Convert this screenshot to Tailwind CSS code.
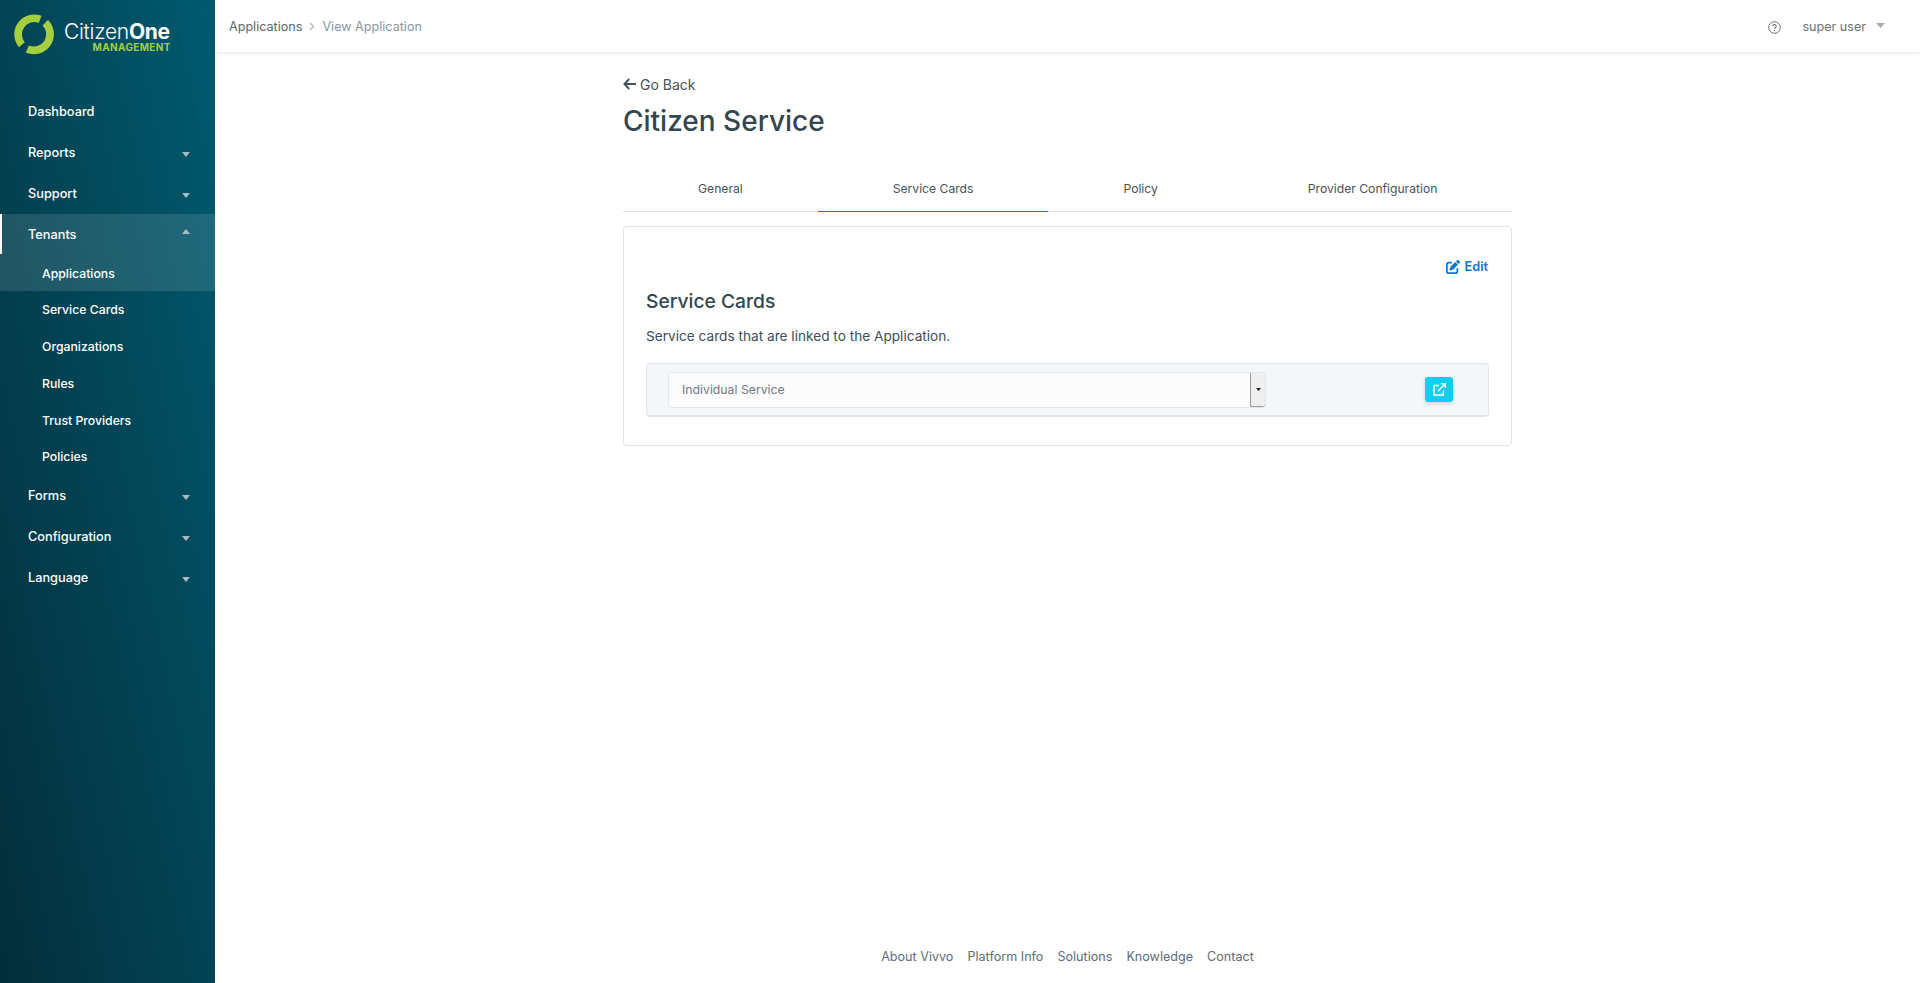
<!DOCTYPE html>
<html lang="en">
<head>
    <meta charset="UTF-8" />
    <meta name="viewport" content="width=device-width, initial-scale=1.0" />
    <title>Citizen Service - CitizenOne Management</title>
    <script src="https://cdn.jsdelivr.net/npm/@tailwindcss/browser@4"></script>
</head>
<body class="font-['Inter',sans-serif] bg-white">
    <div class="flex h-[983px] overflow-hidden">
        <!-- Sidebar -->
        <aside class="w-[215px] shrink-0 bg-linear-to-tr from-[#032e3b] to-[#005b70] text-white">
            <div class="h-[91px] flex items-start pt-[13px] pl-[13px]">
                <svg class="w-[43px] h-[43px] shrink-0" viewBox="0 0 42 42" fill="none" stroke="#a5cf3f" stroke-width="7.5">
                    <path d="M26.5 6.2A15.8 15.8 0 0 0 8.6 31"></path>
                    <path d="M31.5 9.5A15.8 15.8 0 0 1 14 35.2"></path>
                </svg>
                <div class="ml-[8px] mt-[9px] flex flex-col items-end">
                    <div class="text-[21px] leading-[20px] font-light tracking-[-0.3px] whitespace-nowrap">Citizen<span class="font-bold">One</span></div>
                    <div class="text-[10px] leading-[10px] font-bold tracking-[0.35px] mr-[-1px] text-[#a5cf3f]">MANAGEMENT</div>
                </div>
            </div>
            <nav class="text-[12.75px] font-medium">
                <a class="flex items-center justify-between h-[41px] pl-[28px] pr-[25px]">Dashboard</a>
                <a class="flex items-center justify-between h-[41px] pl-[28px] pr-[25px]">Reports
                    <svg class="w-[8px] h-[5px] mt-[3px]" viewBox="0 0 8 5"><path d="M0 0h8L4 5z" fill="#a9bcc3"></path></svg>
                </a>
                <a class="flex items-center justify-between h-[41px] pl-[28px] pr-[25px]">Support
                    <svg class="w-[8px] h-[5px] mt-[3px]" viewBox="0 0 8 5"><path d="M0 0h8L4 5z" fill="#a9bcc3"></path></svg>
                </a>
                <div class="bg-white/12">
                    <a class="flex items-center justify-between h-[40px] pt-[1px] pl-[26px] pr-[25px] border-l-2 border-white">Tenants
                        <svg class="w-[8px] h-[5px] mb-[6px]" viewBox="0 0 8 5"><path d="M0 5h8L4 0z" fill="#a9bcc3"></path></svg>
                    </a>
                    <a class="flex items-center h-[37px] pt-[3px] pl-[42px] text-[12.25px]">Applications</a>
                </div>
                <div class="text-[12.25px]">
                    <a class="flex items-center h-[37px] pt-[1px] pl-[42px]">Service Cards</a>
                    <a class="flex items-center h-[37px] pt-[1px] pl-[42px]">Organizations</a>
                    <a class="flex items-center h-[37px] pt-[1px] pl-[42px]">Rules</a>
                    <a class="flex items-center h-[37px] pt-[1px] pl-[42px]">Trust Providers</a>
                    <a class="flex items-center h-[36px] pl-[42px]">Policies</a>
                </div>
                <a class="flex items-center justify-between h-[41px] pl-[28px] pr-[25px]">Forms
                    <svg class="w-[8px] h-[5px] mt-[3px]" viewBox="0 0 8 5"><path d="M0 0h8L4 5z" fill="#a9bcc3"></path></svg>
                </a>
                <a class="flex items-center justify-between h-[41px] pl-[28px] pr-[25px]">Configuration
                    <svg class="w-[8px] h-[5px] mt-[3px]" viewBox="0 0 8 5"><path d="M0 0h8L4 5z" fill="#a9bcc3"></path></svg>
                </a>
                <a class="flex items-center justify-between h-[41px] pl-[28px] pr-[25px]">Language
                    <svg class="w-[8px] h-[5px] mt-[3px]" viewBox="0 0 8 5"><path d="M0 0h8L4 5z" fill="#a9bcc3"></path></svg>
                </a>
            </nav>
        </aside>

        <div class="flex-1 flex flex-col min-w-0">
            <!-- Top bar -->
            <header class="h-[52px] shrink-0 flex items-center justify-between pl-[14px] pr-[35px] shadow-[0_1px_4px_rgba(0,0,0,0.1)] text-[12.6px]">
                <div class="flex items-center mt-[2px]">
                    <span class="text-[#5c6670]">Applications</span>
                    <svg class="w-[6px] h-[9px] mx-[7px]" viewBox="0 0 6 9" fill="none" stroke="#b4bbc3" stroke-width="1.5"><path d="M1 1l3.5 3.5L1 8"></path></svg>
                    <span class="text-[#8a95a3]">View Application</span>
                </div>
                <div class="flex items-center text-[#68727d] mt-[3px]">
                    <svg class="w-[13px] h-[13px] mr-[21px]" viewBox="0 0 13 13" fill="none" stroke="#68727d">
                        <circle cx="6.5" cy="6.5" r="5.8" stroke-width="1"></circle>
                        <path d="M4.8 5.2a1.7 1.7 0 1 1 2.6 1.4c-.6.4-.9.6-.9 1.3" stroke-width="1.1"></path>
                        <path d="M6.5 9v1" stroke-width="1.1"></path>
                    </svg>
                    <span>super user</span>
                    <svg class="w-[9px] h-[5px] ml-[10px] -mt-[3px]" viewBox="0 0 9 5"><path d="M0 0h9L4.5 5z" fill="#a5acb4"></path></svg>
                </div>
            </header>

            <!-- Content -->
            <main class="flex-1 w-[889px] ml-[408px] pt-[22px] text-[#34464f]">
                <a class="flex items-center h-[20px] text-[14px] text-[#44535e]">
                    <svg class="w-[13px] h-[12px] mr-[4px] -mt-[1px]" viewBox="0 0 13 12" fill="none" stroke="#44535e" stroke-width="1.9"><path d="M6.2 1L1.4 6l4.8 5M1.6 6H13"></path></svg>
                    Go Back
                </a>
                <h1 class="text-[28px] leading-[40px] font-medium mt-[7px] text-[#34464f]">Citizen Service</h1>

                <!-- Tabs -->
                <div class="flex mt-[23px] border-b border-[#dfe2e6] text-[12.15px] text-[#44535e] h-[48px]">
                    <a class="flex-auto px-[75px] pt-[4px] flex items-center justify-center whitespace-nowrap">General</a>
                    <a class="flex-auto px-[75px] pt-[4px] flex items-center justify-center whitespace-nowrap border-b border-[#1a73c0] -mb-[1px]">Service Cards</a>
                    <a class="flex-auto px-[75px] pt-[4px] flex items-center justify-center whitespace-nowrap">Policy</a>
                    <a class="flex-auto px-[75px] pt-[4px] flex items-center justify-center whitespace-nowrap">Provider Configuration</a>
                </div>

                <!-- Card -->
                <section class="mt-[14px] h-[220px] border border-[#dfe2e8] rounded-[4px] pt-[30px] px-[22px]">
                    <div class="flex justify-end mr-[1px]">
                        <a class="flex items-center text-[12.75px] font-semibold text-[#0a78cf]">
                            <svg class="w-[14px] h-[14px] mr-[4px]" viewBox="0 0 512 512" fill="#0a78cf"><path d="M471.6 21.7c-21.9-21.9-57.3-21.9-79.2 0L362.3 51.7l97.9 97.9 30.1-30.1c21.9-21.9 21.9-57.3 0-79.2L471.6 21.7zm-299.2 220c-6.1 6.1-10.8 13.6-13.5 21.9l-29.6 88.8c-2.9 8.6-.6 18.1 5.8 24.6s15.9 8.7 24.6 5.8l88.8-29.6c8.2-2.7 15.7-7.4 21.9-13.5L437.7 172.3 339.7 74.3 172.4 241.7zM96 64C43 64 0 107 0 160V416c0 53 43 96 96 96H352c53 0 96-43 96-96V320c0-17.7-14.3-32-32-32s-32 14.3-32 32v96c0 17.7-14.3 32-32 32H96c-17.7 0-32-14.3-32-32V160c0-17.7 14.3-32 32-32h96c17.7 0 32-14.3 32-32s-14.3-32-32-32H96z"></path></svg>
                            Edit
                        </a>
                    </div>
                    <h2 class="text-[19.25px] leading-[28px] font-medium mt-[11px]">Service Cards</h2>
                    <p class="text-[13.65px] leading-[20px] mt-[11px] text-[#3e4d57]">Service cards that are linked to the Application.</p>

                    <div class="mt-[17px] h-[54px] bg-[#f4f7fa] border border-[#e1e5ea] border-b-2 rounded-[4px] flex items-center pl-[21px] pr-[35px] justify-between">
                        <div class="w-[598px] h-[36px] flex bg-[#fcfcfd] border border-[#e4e6ea] rounded-[3px]">
                            <div class="flex-1 flex items-center pl-[13px] pt-[2px] text-[12.25px] text-[#707a84]">Individual Service</div>
                            <div class="w-[15px] flex items-center justify-center bg-[#efefef] border-l border-b border-[#9a9a9a] rounded-r-[3px]">
                                <svg class="w-[5px] h-[3px]" viewBox="0 0 5 3"><path d="M0 0h5L2.5 3z" fill="#222"></path></svg>
                            </div>
                        </div>
                        <button class="w-[28px] h-[25px] flex items-center justify-center bg-[#13cdf1] rounded-[3px] shadow-[0_2px_4px_rgba(0,0,0,0.14)]">
                            <svg class="w-[13px] h-[13px]" viewBox="0 0 13 13" fill="none" stroke="#fff" stroke-width="1.5">
                                <path d="M6 2.6H1v9.4h9.4V7.6"></path>
                                <path d="M4.8 8.2L12 1M8 .8h4.2V5"></path>
                            </svg>
                        </button>
                    </div>
                </section>
            </main>

            <!-- Footer -->
            <footer class="h-[53px] shrink-0 flex justify-center gap-[14px] pt-[17px] text-[12.6px] leading-[20px] text-[#5f6b78]">
                <a>About Vivvo</a>
                <a>Platform Info</a>
                <a>Solutions</a>
                <a>Knowledge</a>
                <a>Contact</a>
            </footer>
        </div>
    </div>
</body>
</html>
